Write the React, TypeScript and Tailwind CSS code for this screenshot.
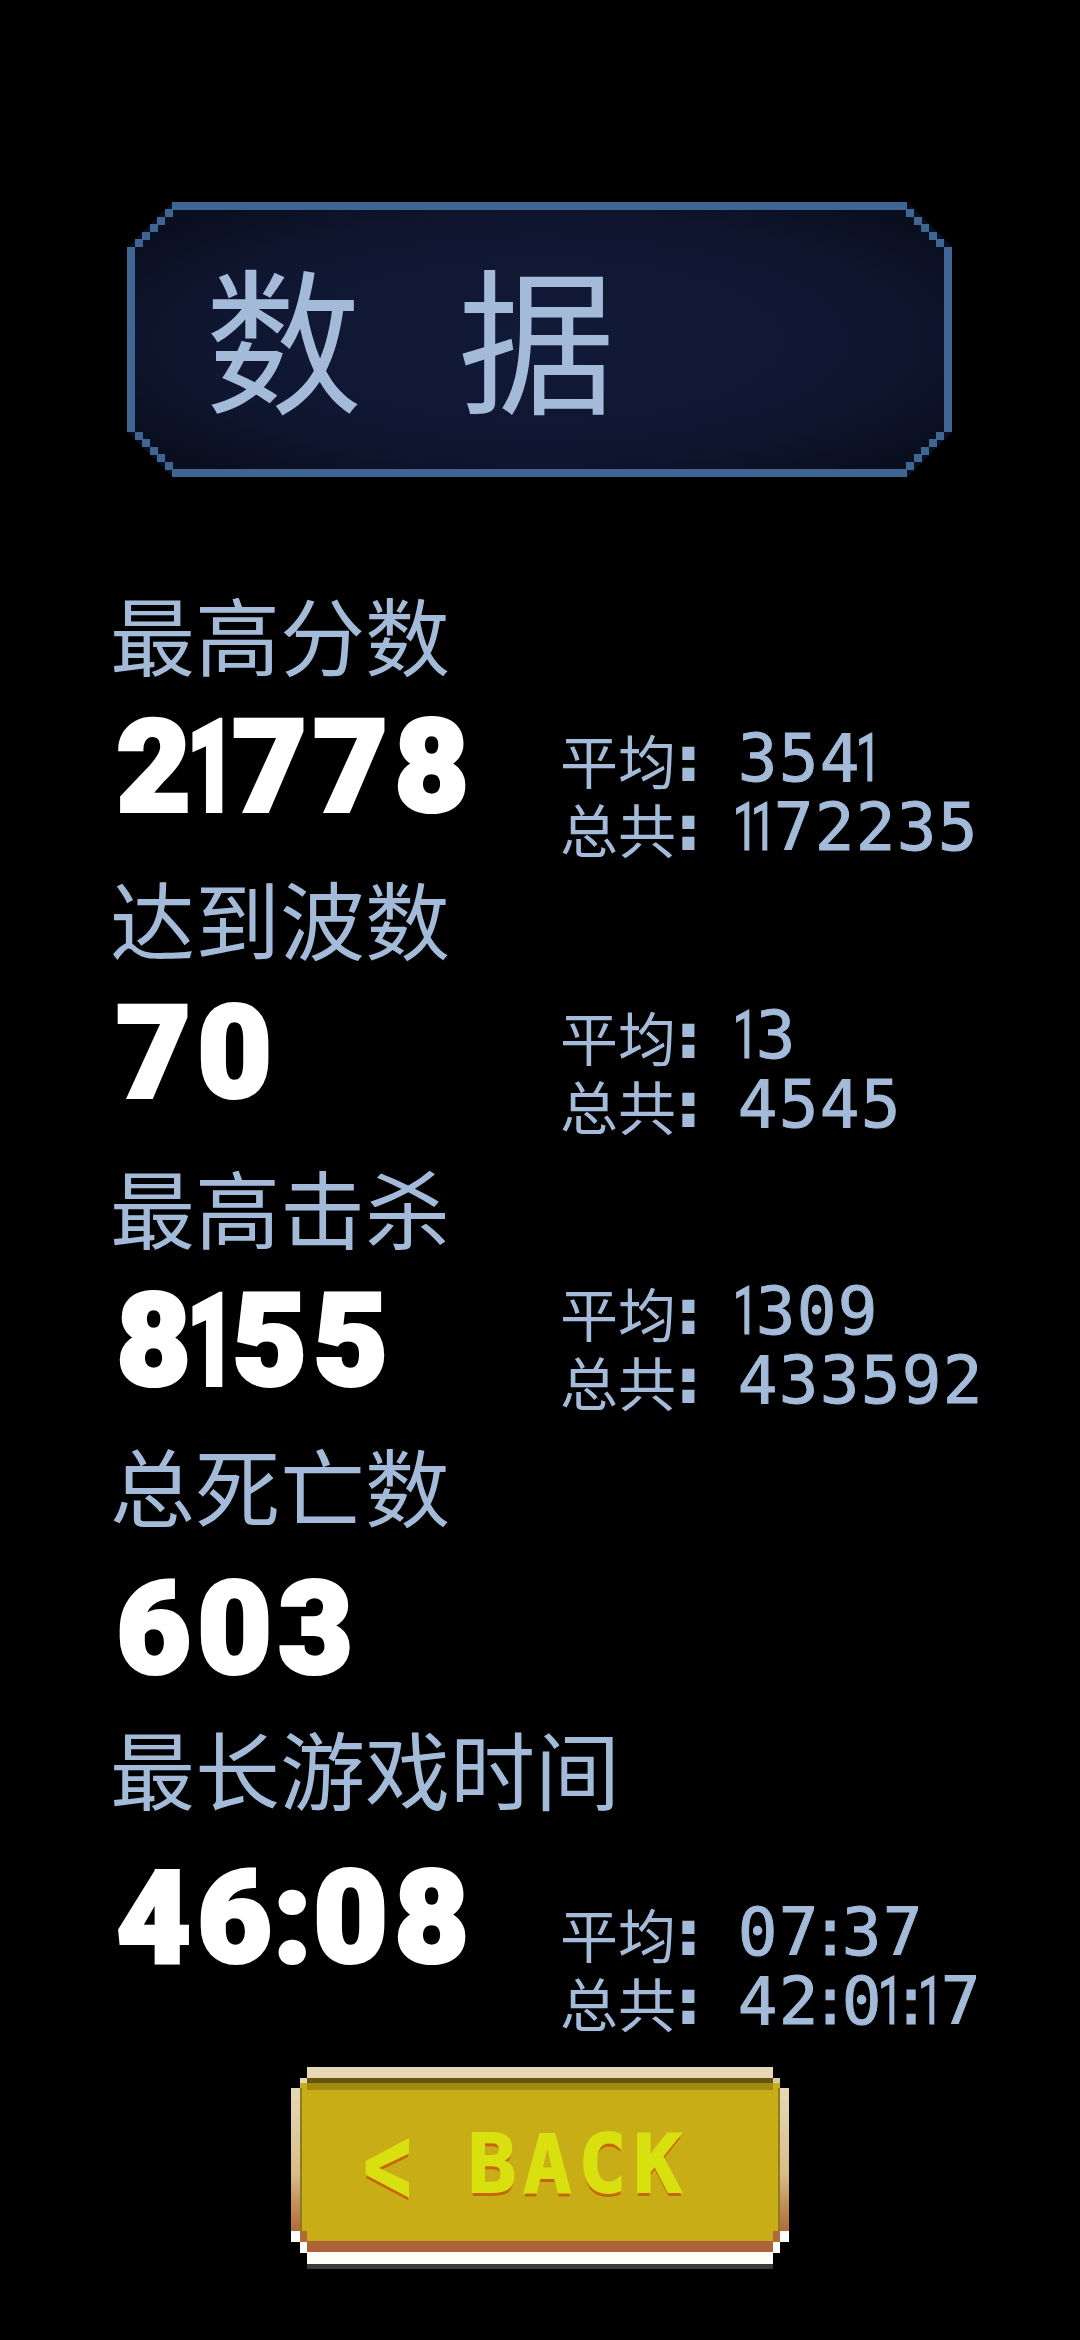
const cjk = "font-['Noto_Sans_CJK_SC','Noto_Sans',sans-serif]";
const mono = "font-['DejaVu_Sans_Mono','Liberation_Mono',monospace]";
const roboto = "font-['Roboto','Liberation_Sans',sans-serif]";

const rows = [
  { title: "最高分数", best: "21778", avg: "3541", total: "1172235", rowClass: "h-[284px]", bestTop: "mt-[46px]", statTop: "mt-[53px]" },
  { title: "达到波数", best: "70", avg: "13", total: "4545", rowClass: "h-[289px]", bestTop: "mt-[48px]", statTop: "mt-[46px]" },
  { title: "最高击杀", best: "8155", avg: "1309", total: "433592", rowClass: "h-[278px]", bestTop: "mt-[47px]", statTop: "mt-[33px]" },
  { title: "总死亡数", best: "603", rowClass: "h-[283px]", bestTop: "mt-[57px]", statTop: "mt-0" },
  { title: "最长游戏时间", best: "46:08", avg: "07:37", total: "42:01:17", rowClass: "h-[283px]", bestTop: "mt-[63px]", statTop: "mt-[93px]" },
];

// the game font has a thin 1 and colon, so those two get a narrower cell
const BigDigits = ({ text }: { text: string }) => (
  <>
    {text.split("").map((ch, i) => {
      const narrow = ch === "1" || ch === ":";
      return (
        <span key={i} className={`inline-flex justify-center ${narrow ? "w-[35px]" : "w-[81px]"}`}>
          <span className={`inline-block ${ch === "1" ? "scale-x-[0.65]" : ""}`}>{ch}</span>
        </span>
      );
    })}
  </>
);

const SmallDigits = ({ text }: { text: string }) => (
  <>
    {text.split("").map((ch, i) => {
      if (ch === "1") {
        return (
          <span key={i} className={`${roboto} inline-flex w-[18px] justify-center`}>
            <span className="inline-block scale-x-[0.7]">1</span>
          </span>
        );
      }
      return (
        <span key={i} className={`inline-flex justify-center ${ch === ":" ? "w-[22px]" : "w-[41px]"}`}>
          {ch}
        </span>
      );
    })}
  </>
);

const StatLine = ({ label, value }: { label: string; value: string }) => (
  <div className="flex h-[69px] items-center text-[#a3bbd9]">
    <span className={`${cjk} w-[116px] text-[58px] leading-none`}>{label}</span>
    <span className={`${mono} mr-[36px] flex w-[25px] justify-center text-[62px] font-bold leading-none [-webkit-text-stroke:2px_#a3bbd9]`}>:</span>
    <span className={`${mono} flex items-baseline text-[66px] leading-none [-webkit-text-stroke:1px_#a3bbd9]`}>
      <SmallDigits text={value} />
    </span>
  </div>
);

const StatRow = ({ title, best, avg, total, rowClass, bestTop, statTop }: (typeof rows)[number]) => (
  <section className={`${rowClass} pl-[110px]`}>
    <h2 className={`${cjk} h-[76px] text-[85px] font-normal leading-[76px] text-[#a3bbd9]`}>{title}</h2>
    <div className="flex">
      <div className={`${roboto} ${bestTop} flex h-[100px] w-[450px] items-baseline pl-[3px] text-[128px] font-black leading-[100px] text-white [-webkit-text-stroke:4px_#ffffff]`}>
        <BigDigits text={best} />
      </div>
      {avg && total && (
        <div className={statTop}>
          <StatLine label="平均" value={avg} />
          <StatLine label="总共" value={total} />
        </div>
      )}
    </div>
  </section>
);

const TitleFrame = () => (
  <svg className="absolute inset-0" width="825" height="275" viewBox="0 0 825 275" shapeRendering="crispEdges">
    <defs>
      <radialGradient id="panel" cx="50%" cy="50%" r="60%">
        <stop offset="0%" stopColor="#111a38" />
        <stop offset="70%" stopColor="#0f1630" />
        <stop offset="100%" stopColor="#0a0f20" />
      </radialGradient>
    </defs>
    <polygon points="45,0 780,0 825,45 825,230 780,275 45,275 0,230 0,45" fill="url(#panel)" />
    <g fill="#3f6692">
      <rect x="45" y="0" width="735" height="8" />
      <rect x="45" y="267" width="735" height="8" />
      <rect x="0" y="45" width="8" height="185" />
      <rect x="817" y="45" width="8" height="185" />
      <rect x="8" y="37" width="8" height="8" />
      <rect x="15" y="30" width="8" height="8" />
      <rect x="23" y="22" width="8" height="8" />
      <rect x="30" y="15" width="8" height="8" />
      <rect x="38" y="7" width="8" height="8" />
      <rect x="809" y="37" width="8" height="8" />
      <rect x="802" y="30" width="8" height="8" />
      <rect x="794" y="22" width="8" height="8" />
      <rect x="787" y="15" width="8" height="8" />
      <rect x="779" y="7" width="8" height="8" />
      <rect x="8" y="230" width="8" height="8" />
      <rect x="15" y="237" width="8" height="8" />
      <rect x="23" y="245" width="8" height="8" />
      <rect x="30" y="252" width="8" height="8" />
      <rect x="38" y="260" width="8" height="8" />
      <rect x="809" y="230" width="8" height="8" />
      <rect x="802" y="237" width="8" height="8" />
      <rect x="794" y="245" width="8" height="8" />
      <rect x="787" y="252" width="8" height="8" />
      <rect x="779" y="260" width="8" height="8" />
    </g>
  </svg>
);

const BackFrame = () => (
  <svg className="absolute inset-0" width="498" height="202" viewBox="0 0 498 202" shapeRendering="crispEdges">
    <defs>
      <linearGradient id="side" x1="0" y1="0" x2="0" y2="1">
        <stop offset="0%" stopColor="#e6d8b5" />
        <stop offset="60%" stopColor="#d9bd88" />
        <stop offset="80%" stopColor="#c4915a" />
        <stop offset="100%" stopColor="#b06a3a" />
      </linearGradient>
    </defs>
    <rect x="16" y="0" width="466" height="11" fill="#e6d8b5" />
    <rect x="9" y="11" width="7" height="10" fill="#e6d8b5" />
    <rect x="482" y="11" width="7" height="10" fill="#d6c9a4" />
    <rect x="0" y="21" width="9" height="143" fill="url(#side)" />
    <rect x="489" y="21" width="9" height="143" fill="url(#side)" />
    <rect x="9" y="16" width="480" height="158" fill="#c9ad17" />
    <rect x="16" y="11" width="466" height="5" fill="#66550f" />
    <rect x="16" y="16" width="466" height="7" fill="#a08a12" />
    <rect x="9" y="21" width="2" height="143" fill="#8a7c20" />
    <rect x="487" y="21" width="2" height="143" fill="#8a7c20" />
    <rect x="0" y="164" width="9" height="11" fill="#ffffff" />
    <rect x="489" y="164" width="9" height="11" fill="#ffffff" />
    <rect x="9" y="164" width="7" height="11" fill="#b06a3a" />
    <rect x="482" y="164" width="7" height="11" fill="#b06a3a" />
    <rect x="9" y="175" width="7" height="11" fill="#ffffff" />
    <rect x="482" y="175" width="7" height="11" fill="#ffffff" />
    <rect x="16" y="174" width="466" height="11" fill="#ab643a" />
    <rect x="16" y="185" width="466" height="12" fill="#fffdf7" />
    <rect x="16" y="197" width="466" height="5" fill="#3a3a3a" />
  </svg>
);

export default function App() {
  return (
    <main className="h-[2340px] w-[1080px] overflow-hidden bg-black pt-[202px]">
      <header className="relative mb-[118px] ml-[127px] flex h-[275px] w-[825px] items-center pb-[12px] pl-[78px]">
        <TitleFrame />
        <h1 className={`${cjk} relative flex gap-[96px] text-[157px] font-normal leading-none text-[#a3bbd9]`}>
          <span>数</span>
          <span>据</span>
        </h1>
      </header>

      {rows.map((row) => (
        <StatRow key={row.title} {...row} />
      ))}

      <button className="relative ml-[291px] mt-[55px] flex h-[202px] w-[498px] items-center pb-[6px] pl-[72px]">
        <BackFrame />
        <span
          className={`${mono} relative flex items-center text-[80px] font-bold leading-none tracking-[7px] text-[#d8e010] [-webkit-text-stroke:2px_#d8e010] [text-shadow:0_4px_0_#c8640a]`}
        >
          <span className="w-[105px] origin-left scale-x-75 text-left text-[108px]">{"<"}</span>
          <span>BACK</span>
        </span>
      </button>
    </main>
  );
}
